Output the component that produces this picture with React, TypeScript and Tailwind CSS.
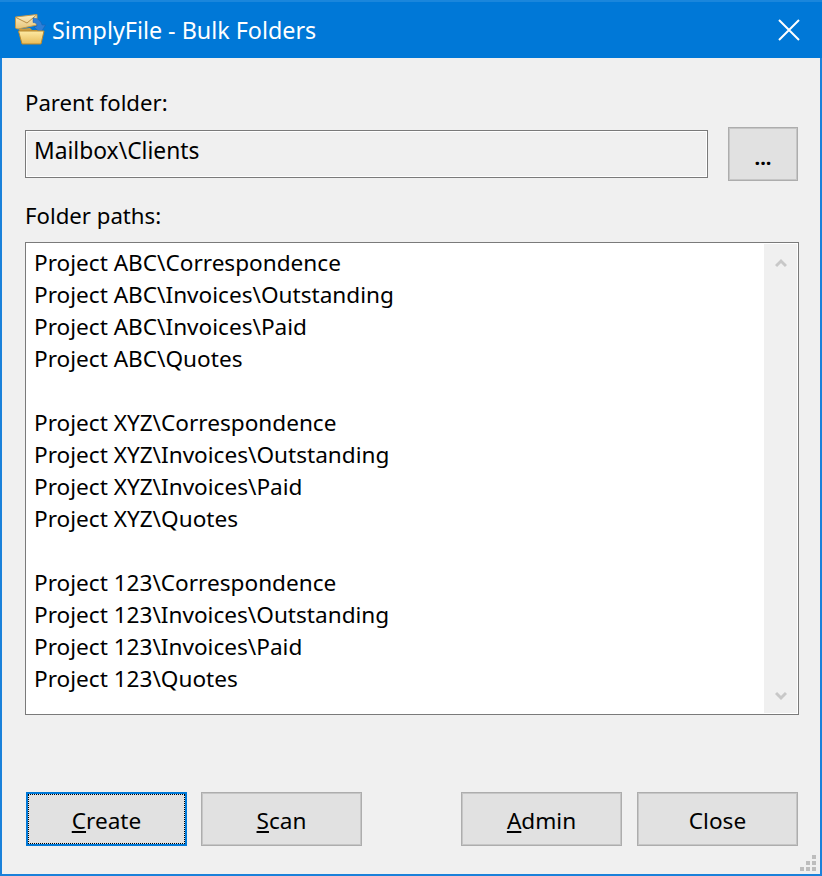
import React from 'react';

const paths = [
  'Project ABC\\Correspondence',
  'Project ABC\\Invoices\\Outstanding',
  'Project ABC\\Invoices\\Paid',
  'Project ABC\\Quotes',
  '',
  'Project XYZ\\Correspondence',
  'Project XYZ\\Invoices\\Outstanding',
  'Project XYZ\\Invoices\\Paid',
  'Project XYZ\\Quotes',
  '',
  'Project 123\\Correspondence',
  'Project 123\\Invoices\\Outstanding',
  'Project 123\\Invoices\\Paid',
  'Project 123\\Quotes',
];

function AppIcon() {
  return (
    <svg width="32" height="32" viewBox="0 0 32 32" className="shrink-0">
      <defs>
        <linearGradient id="env" x1="0" y1="0" x2="0" y2="1">
          <stop offset="0" stopColor="#fbeec4" />
          <stop offset="1" stopColor="#e6c478" />
        </linearGradient>
        <linearGradient id="fold" x1="0" y1="0" x2="0" y2="1">
          <stop offset="0" stopColor="#fdeaa4" />
          <stop offset="1" stopColor="#e8bc5a" />
        </linearGradient>
      </defs>
      {/* envelope */}
      <path d="M0.5 3 L22 0.5 L22 11 L3 15 L0.5 14 Z" fill="url(#env)" stroke="#c49a4a" strokeWidth="1" />
      <path d="M1 3.5 L12 9 L21.5 1" fill="none" stroke="#b98f45" strokeWidth="1" />
      {/* folder back */}
      <path d="M4 15 L15 14 L17 16 L27 16 L27 29 L7 29 Z" fill="#c99a3f" />
      {/* arrow */}
      <path d="M18 4 C23 4 26 7 27 11 L30.5 11 L25.5 19 L19 13 L22 12 C22 10 21 8.5 18 8.5 Z" fill="#2f7fd6" stroke="#1c5fae" strokeWidth="0.5" />
      {/* folder front */}
      <path d="M3.5 17 L29 17 L26 30 L7 30 Z" fill="url(#fold)" stroke="#b8892f" strokeWidth="1" />
    </svg>
  );
}

function ActionButton({ children, focused = false }: { children: React.ReactNode; focused?: boolean }) {
  return (
    <button
      className={`h-[54px] w-[161px] pt-[4px] bg-[#e1e1e1] text-[22.6px] text-[#000] ${
        focused
          ? 'border-2 border-[#0078d7] outline outline-1 outline-dotted outline-black outline-offset-[-3px]'
          : 'border border-[#adadad] shadow-[inset_0_0_0_1px_#c6c6c6]'
      }`}
    >
      {children}
    </button>
  );
}

function Key({ children }: { children: React.ReactNode }) {
  return <span className="underline underline-offset-[2px] decoration-2 [text-decoration-skip-ink:none]">{children}</span>;
}

export default function App() {
  return (
    <div className="relative w-[822px] h-[876px] flex flex-col bg-[#f0f0f0] border-x-2 border-b-2 border-[#1a81da] text-[22.6px] leading-[32px] text-black font-['Noto_Sans','Open_Sans',sans-serif]">
      {/* Title bar */}
      <div className="-mx-[2px] h-[58px] shrink-0 flex items-center bg-[#0078d7] border-t-2 border-[#1a86dc] pl-[15px] pr-[22px] text-[23.3px] text-white">
        <AppIcon />
        <span className="ml-[5px] flex-1">SimplyFile - Bulk Folders</span>
        <svg width="22" height="22" viewBox="0 0 22 22">
          <path d="M1 1 L21 21 M21 1 L1 21" stroke="#ffffff" strokeWidth="2" />
        </svg>
      </div>

      <div className="flex-1 flex flex-col pl-[23px] pr-[22px]">
        <div className="mt-[29px] text-[22.2px]">Parent folder:</div>

        <div className="mt-[8px] flex items-center justify-between">
          <div className="w-[683px] h-[48px] flex items-center pl-[8px] pb-[6px] text-[22.8px] border border-[#7a7a7a] shadow-[inset_0_0_0_1px_#ffffff]">
            Mailbox\Clients
          </div>
          <button className="w-[70px] h-[54px] pt-[8px] bg-[#e1e1e1] border border-[#adadad] shadow-[inset_0_0_0_1px_#c6c6c6] text-[20px] font-bold">...</button>
        </div>

        <div className="mt-[19px] text-[22.2px]">Folder paths:</div>

        <div className="mt-[10px] -mr-[1px] h-[473px] flex border border-[#7a7a7a] bg-white">
          <div className="flex-1 pl-[8px] pt-[4px]">
            {paths.map((p, i) => (
              <div key={i} className="h-[32px] whitespace-nowrap">
                {p}
              </div>
            ))}
          </div>
          <div className="w-[33px] my-[1px] mr-[1px] flex flex-col justify-between items-center bg-[#f0f0f0] pt-[14px] pb-[12px]">
            <svg width="12" height="10" viewBox="0 0 12 10">
              <path d="M1 8 L6 3 L11 8" fill="none" stroke="#c8c8c8" strokeWidth="3" />
            </svg>
            <svg width="12" height="10" viewBox="0 0 12 10">
              <path d="M1 2 L6 7 L11 2" fill="none" stroke="#c8c8c8" strokeWidth="3" />
            </svg>
          </div>
        </div>

        <div className="mt-[77px] flex items-center pl-[1px]">
          <ActionButton focused>
            <Key>C</Key>reate
          </ActionButton>
          <div className="ml-[14px]">
            <ActionButton>
              <Key>S</Key>can
            </ActionButton>
          </div>
          <div className="ml-auto flex gap-[15px]">
            <ActionButton>
              <Key>A</Key>dmin
            </ActionButton>
            <ActionButton>Close</ActionButton>
          </div>
        </div>
      </div>

      {/* Resize grip */}
      <svg width="16" height="16" viewBox="0 0 16 16" className="absolute right-[4px] bottom-[3px]">
        <g fill="#bdbdbd">
          <rect x="12" y="0" width="4" height="4" />
          <rect x="6" y="6" width="4" height="4" />
          <rect x="12" y="6" width="4" height="4" />
          <rect x="0" y="12" width="4" height="4" />
          <rect x="6" y="12" width="4" height="4" />
          <rect x="12" y="12" width="4" height="4" />
        </g>
      </svg>
    </div>
  );
}
